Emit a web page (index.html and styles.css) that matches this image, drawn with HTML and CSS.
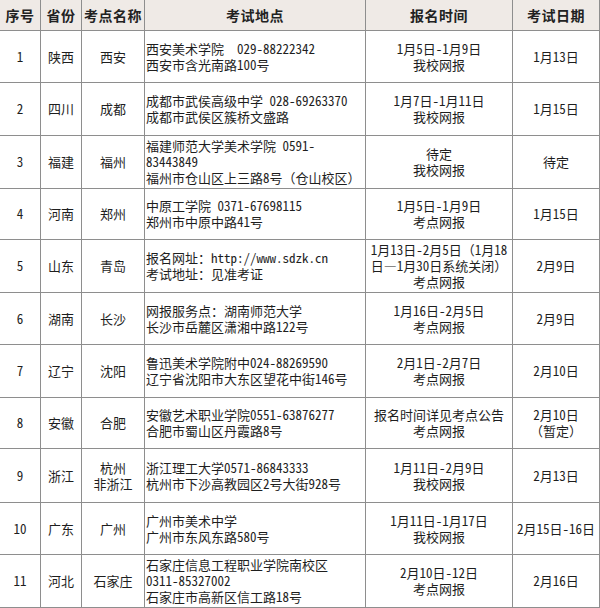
FILE: index.html
```html
<!DOCTYPE html>
<html lang="zh-CN">
<head>
<meta charset="utf-8">
<title>考点安排</title>
<link rel="stylesheet" href="styles.css">
</head>
<body>
<div class="sheet">
  <div class="cell head"><span class="ln">序号</span></div>
  <div class="cell head"><span class="ln">省份</span></div>
  <div class="cell head"><span class="ln">考点名称</span></div>
  <div class="cell head"><span class="ln">考试地点</span></div>
  <div class="cell head"><span class="ln">报名时间</span></div>
  <div class="cell head last"><span class="ln">考试日期</span></div>

  <div class="cell"><span class="ln">1</span></div>
  <div class="cell"><span class="ln">陕西</span></div>
  <div class="cell"><span class="ln">西安</span></div>
  <div class="cell addr"><span class="ln">西安美术学院&nbsp; 029-88222342</span><span class="ln">西安市含光南路100号</span></div>
  <div class="cell"><span class="ln">1月5日-1月9日</span><span class="ln">我校网报</span></div>
  <div class="cell last"><span class="ln">1月13日</span></div>

  <div class="cell"><span class="ln">2</span></div>
  <div class="cell"><span class="ln">四川</span></div>
  <div class="cell"><span class="ln">成都</span></div>
  <div class="cell addr"><span class="ln">成都市武侯高级中学 028-69263370</span><span class="ln">成都市武侯区簇桥文盛路</span></div>
  <div class="cell"><span class="ln">1月7日-1月11日</span><span class="ln">我校网报</span></div>
  <div class="cell last"><span class="ln">1月15日</span></div>

  <div class="cell"><span class="ln">3</span></div>
  <div class="cell"><span class="ln">福建</span></div>
  <div class="cell"><span class="ln">福州</span></div>
  <div class="cell addr"><span class="ln">福建师范大学美术学院 0591-</span><span class="ln">83443849</span><span class="ln">福州市仓山区上三路8号（仓山校区）</span></div>
  <div class="cell"><span class="ln">待定</span><span class="ln">我校网报</span></div>
  <div class="cell last"><span class="ln">待定</span></div>

  <div class="cell"><span class="ln">4</span></div>
  <div class="cell"><span class="ln">河南</span></div>
  <div class="cell"><span class="ln">郑州</span></div>
  <div class="cell addr"><span class="ln">中原工学院 0371-67698115</span><span class="ln">郑州市中原中路41号</span></div>
  <div class="cell"><span class="ln">1月5日-1月9日</span><span class="ln">考点网报</span></div>
  <div class="cell last"><span class="ln">1月15日</span></div>

  <div class="cell"><span class="ln">5</span></div>
  <div class="cell"><span class="ln">山东</span></div>
  <div class="cell"><span class="ln">青岛</span></div>
  <div class="cell addr"><span class="ln">报名网址：http://www.sdzk.cn</span><span class="ln">考试地址：见准考证</span></div>
  <div class="cell"><span class="ln">1月13日-2月5日（1月18</span><span class="ln">日—1月30日系统关闭）</span><span class="ln">考点网报</span></div>
  <div class="cell last"><span class="ln">2月9日</span></div>

  <div class="cell"><span class="ln">6</span></div>
  <div class="cell"><span class="ln">湖南</span></div>
  <div class="cell"><span class="ln">长沙</span></div>
  <div class="cell addr"><span class="ln">网报服务点：湖南师范大学</span><span class="ln">长沙市岳麓区潇湘中路122号</span></div>
  <div class="cell"><span class="ln">1月16日-2月5日</span><span class="ln">考点网报</span></div>
  <div class="cell last"><span class="ln">2月9日</span></div>

  <div class="cell"><span class="ln">7</span></div>
  <div class="cell"><span class="ln">辽宁</span></div>
  <div class="cell"><span class="ln">沈阳</span></div>
  <div class="cell addr"><span class="ln">鲁迅美术学院附中024-88269590</span><span class="ln">辽宁省沈阳市大东区望花中街146号</span></div>
  <div class="cell"><span class="ln">2月1日-2月7日</span><span class="ln">考点网报</span></div>
  <div class="cell last"><span class="ln">2月10日</span></div>

  <div class="cell"><span class="ln">8</span></div>
  <div class="cell"><span class="ln">安徽</span></div>
  <div class="cell"><span class="ln">合肥</span></div>
  <div class="cell addr"><span class="ln">安徽艺术职业学院0551-63876277</span><span class="ln">合肥市蜀山区丹霞路8号</span></div>
  <div class="cell"><span class="ln">报名时间详见考点公告</span><span class="ln">考点网报</span></div>
  <div class="cell last"><span class="ln">2月10日</span><span class="ln">（暂定）</span></div>

  <div class="cell"><span class="ln">9</span></div>
  <div class="cell"><span class="ln">浙江</span></div>
  <div class="cell"><span class="ln">杭州</span><span class="ln">非浙江</span></div>
  <div class="cell addr"><span class="ln">浙江理工大学0571-86843333</span><span class="ln">杭州市下沙高教园区2号大街928号</span></div>
  <div class="cell"><span class="ln">1月11日-2月9日</span><span class="ln">我校网报</span></div>
  <div class="cell last"><span class="ln">2月13日</span></div>

  <div class="cell"><span class="ln">10</span></div>
  <div class="cell"><span class="ln">广东</span></div>
  <div class="cell"><span class="ln">广州</span></div>
  <div class="cell addr"><span class="ln">广州市美术中学</span><span class="ln">广州市东风东路580号</span></div>
  <div class="cell"><span class="ln">1月11日-1月17日</span><span class="ln">我校网报</span></div>
  <div class="cell last"><span class="ln">2月15日-16日</span></div>

  <div class="cell"><span class="ln">11</span></div>
  <div class="cell"><span class="ln">河北</span></div>
  <div class="cell"><span class="ln">石家庄</span></div>
  <div class="cell addr"><span class="ln">石家庄信息工程职业学院南校区</span><span class="ln">0311-85327002</span><span class="ln">石家庄市高新区信工路18号</span></div>
  <div class="cell"><span class="ln">2月10日-12日</span><span class="ln">考点网报</span></div>
  <div class="cell last"><span class="ln">2月16日</span></div>
</div>
</body>
</html>
```

FILE: styles.css
```css
html, body {
  margin: 0;
  padding: 0;
  background: #ffffff;
}

.sheet {
  display: grid;
  width: 600px;
  grid-template-columns: 41px 41px 63px 221px 147px 87px;
  grid-template-rows: 31px 52px 53px 53px 51px 53px 52px 53px 51px 54px 52px 53px;
  font-family: "Noto Sans Mono CJK SC", "Noto Sans CJK SC", sans-serif;
  font-size: 13px;
  line-height: 16px;
  color: #1e1e1e;
}

.cell {
  box-sizing: border-box;
  border-right: 1px solid #8e8e8e;
  border-bottom: 1px solid #8e8e8e;
  display: flex;
  flex-direction: column;
  justify-content: center;
  align-items: center;
  text-align: center;
  white-space: nowrap;
  overflow: hidden;
}

.ln {
  display: block;
  height: 16px;
}

.head {
  background: #efeae6;
  font-weight: bold;
  font-size: 14px;
  color: #222;
  letter-spacing: 0.5px;
}

.addr {
  align-items: flex-start;
  text-align: left;
  padding-left: 1px;
}
```
